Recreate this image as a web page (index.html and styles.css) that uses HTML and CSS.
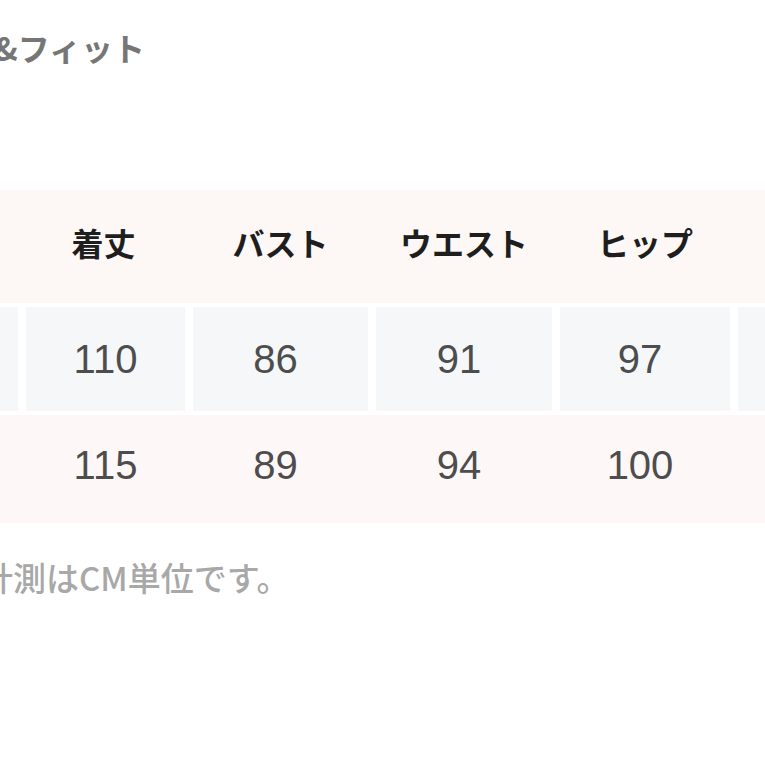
FILE: index.html
```html
<!DOCTYPE html>
<html lang="ja">
<head>
<meta charset="utf-8">
<link rel="stylesheet" href="styles.css">
</head>
<body>
<div class="page">
  <h2 class="title">サイズ&amp;フィット</h2>
  <div class="table">
    <div class="row head">
      <div class="cell"></div>
      <div class="cell">着丈</div>
      <div class="cell">バスト</div>
      <div class="cell">ウエスト</div>
      <div class="cell">ヒップ</div>
      <div class="cell"></div>
    </div>
    <div class="row alt">
      <div class="cell"></div>
      <div class="cell">110</div>
      <div class="cell">86</div>
      <div class="cell">91</div>
      <div class="cell">97</div>
      <div class="cell"></div>
    </div>
    <div class="row pink">
      <div class="cell"></div>
      <div class="cell">115</div>
      <div class="cell">89</div>
      <div class="cell">94</div>
      <div class="cell">100</div>
      <div class="cell"></div>
    </div>
  </div>
  <p class="note">計測はCM単位です。</p>
</div>
</body>
</html>
```

FILE: styles.css
```css
html, body {
  margin: 0;
  padding: 0;
  background: #ffffff;
  overflow: hidden;
}
.page {
  width: 765px;
  height: 765px;
  font-family: "Noto Sans CJK JP", "Noto Sans", sans-serif;
}
.title {
  margin: 0;
  padding-top: 26px;
  font-size: 32px;
  line-height: 42px;
  font-weight: 700;
  color: #767676;
  text-indent: -101px;
  white-space: nowrap;
}
.table {
  margin-top: 122px;
  display: flex;
  flex-direction: column;
  gap: 4px;
}
.row {
  display: grid;
  grid-template-columns: 18px 159px 175px 176px 170px 1fr;
  column-gap: 8px;
}
.cell {
  display: flex;
  align-items: center;
  justify-content: center;
}
.head {
  height: 113px;
  background: #fdf8f6;
  font-size: 32px;
  font-weight: 700;
  color: #1e1e1e;
}
.head .cell {
  padding-bottom: 10px;
}
.head .cell:nth-child(2) {
  padding-right: 4px;
}
.alt {
  height: 104px;
  font-family: "Liberation Sans", Arial, sans-serif;
  font-size: 40px;
  color: #4d4d4d;
}
.alt .cell {
  background: #f5f7f9;
}
.alt .cell:nth-child(3), .alt .cell:nth-child(4), .alt .cell:nth-child(5),
.pink .cell:nth-child(3), .pink .cell:nth-child(4), .pink .cell:nth-child(5) {
  padding-right: 10px;
}
.pink {
  height: 108px;
  background: #fdf8f7;
  font-family: "Liberation Sans", Arial, sans-serif;
  font-size: 40px;
  color: #4d4d4d;
}
.pink .cell {
  padding-bottom: 8px;
}
.note {
  margin: 32px 0 0 0;
  font-size: 33px;
  line-height: 44px;
  font-weight: 500;
  color: #a8a8a8;
  text-indent: -20px;
  white-space: nowrap;
}
```
